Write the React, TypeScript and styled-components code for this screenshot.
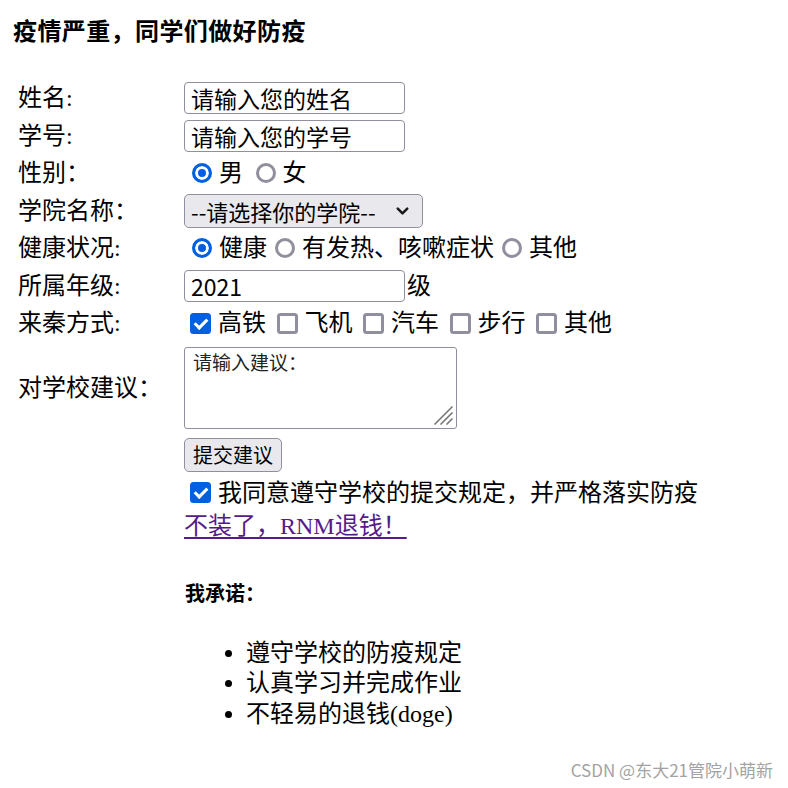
import React from "react";
import styled, { createGlobalStyle } from "styled-components";
import { ChevronDown } from "lucide-react";

const GlobalStyle = createGlobalStyle`
  body {
    margin: 0;
    background: #fff;
    color: #000;
    font-family: "Liberation Serif", "Noto Sans CJK SC", serif;
  }
`;

const Page = styled.div`
  position: relative;
  width: 788px;
  height: 788px;
  box-sizing: border-box;
  padding: 17px 0 0 13px;
  overflow: hidden;
`;

const Title = styled.h4`
  margin: 0;
  font-size: 24px;
  line-height: 30px;
  font-weight: 700;
  letter-spacing: 0.4px;
`;

const Form = styled.form`
  margin-top: 34px;
  display: flex;
  flex-direction: column;
  gap: 3px;
`;

const Row = styled.div<{ $h?: number; $pad?: number }>`
  display: grid;
  grid-template-columns: 171px auto;
  align-items: center;
  min-height: ${(p) => p.$h ?? 34.5}px;
  padding: ${(p) => p.$pad ?? 0}px 0;
  box-sizing: border-box;
`;

const Label = styled.div`
  padding-left: 5px;
  font-size: 24px;
  line-height: 1;
`;

const Field = styled.div`
  display: flex;
  align-items: center;
  font-size: 24px;
  line-height: 1;
`;

const TextInput = styled.input`
  width: 221px;
  height: 32px;
  box-sizing: border-box;
  border: 1.5px solid #8f8f9d;
  border-radius: 4px;
  padding: 0 6px;
  font-family: "Noto Sans CJK SC", sans-serif;
  font-size: 23px;
  color: #000;
  background: #fff;
  outline: none;
`;

const Radio = styled.input.attrs({ type: "radio" })`
  appearance: none;
  width: 20px;
  height: 20px;
  min-width: 20px;
  box-sizing: border-box;
  margin: 0 7px 0 8px;
  border-radius: 50%;
  border: 3px solid #8f8f9d;
  background: #fff;
  flex: none;
  &:checked {
    border: 3px solid #0060df;
    background: #0060df;
    box-shadow: inset 0 0 0 3px #fff;
  }
`;

const Check = styled.input.attrs({ type: "checkbox" })`
  appearance: none;
  position: relative;
  width: 21px;
  height: 21px;
  min-width: 21px;
  box-sizing: border-box;
  margin: 0 7px 0 6px;
  border-radius: 3.5px;
  border: 3px solid #8f8f9d;
  background: #fff;
  flex: none;
  &:checked {
    border-color: #0060df;
    background: #0060df;
  }
  &:checked::after {
    content: "";
    position: absolute;
    left: 4px;
    top: 0px;
    width: 5px;
    height: 10px;
    border: solid #fff;
    border-width: 0 3px 3px 0;
    transform: rotate(45deg);
  }
`;

const OptionText = styled.span<{ $spaced?: boolean }>`
  margin-right: ${(p) => (p.$spaced ? 4.5 : 0)}px;
  white-space: nowrap;
`;

const SelectWrap = styled.div`
  position: relative;
  display: inline-flex;
`;

const Select = styled.select`
  appearance: none;
  width: 239px;
  height: 34px;
  box-sizing: border-box;
  border: 1.5px solid #8f8f9d;
  border-radius: 5px;
  background: #e9e9ed;
  padding: 0 6px;
  font-family: "Noto Sans CJK SC", sans-serif;
  font-size: 22px;
  color: #000;
  outline: none;
`;

const Chevron = styled(ChevronDown)`
  position: absolute;
  right: 11px;
  top: 50%;
  transform: translateY(-50%);
  pointer-events: none;
`;

const Suffix = styled.span`
  margin-left: 2px;
`;

const AreaWrap = styled.div`
  position: relative;
  display: inline-flex;
`;

const TextArea = styled.textarea`
  width: 273px;
  height: 82px;
  box-sizing: border-box;
  border: 1.5px solid #8f8f9d;
  border-radius: 3px;
  padding: 4px 8px;
  resize: none;
  font-family: "Liberation Serif", "Noto Sans CJK SC", serif;
  font-size: 19px;
  line-height: 24px;
  color: #222;
  outline: none;
`;

const Grip = styled.svg`
  position: absolute;
  right: 4px;
  bottom: 4px;
  pointer-events: none;
`;

const Button = styled.button`
  width: 98px;
  height: 34px;
  box-sizing: border-box;
  border: 1.5px solid #8f8f9d;
  border-radius: 5px;
  background: #e9e9ed;
  padding: 0;
  font-family: "Noto Sans CJK SC", sans-serif;
  font-size: 20px;
  color: #000;
`;

const Link = styled.a`
  color: #551a8b;
  font-size: 24px;
  line-height: 30px;
  text-decoration: underline;
  text-underline-offset: 3px;
  white-space: pre;
`;

const Promise = styled.section`
  margin: 41px 0 0 172px;
`;

const PromiseTitle = styled.h5`
  margin: 0;
  font-size: 20px;
  line-height: 24px;
  font-weight: 700;
`;

const List = styled.ul`
  margin: 32px 0 0;
  padding-left: 61px;
  li {
    font-size: 24px;
    line-height: 30.5px;
  }
`;

const Watermark = styled.div`
  position: absolute;
  right: 15px;
  top: 758px;
  font-family: "Noto Sans CJK SC", sans-serif;
  font-size: 17px;
  line-height: 24px;
  color: #a3a3a3;
  white-space: nowrap;
`;

const vehicles = ["高铁", "飞机", "汽车", "步行", "其他"];
const health = ["健康", "有发热、咳嗽症状", "其他"];
const promises = ["遵守学校的防疫规定", "认真学习并完成作业", "不轻易的退钱(doge)"];

export default function App() {
  return (
    <Page>
      <GlobalStyle />
      <Title>疫情严重，同学们做好防疫</Title>
      <Form onSubmit={(e) => e.preventDefault()}>
        <Row>
          <Label>姓名:</Label>
          <Field>
            <TextInput defaultValue="请输入您的姓名" />
          </Field>
        </Row>
        <Row>
          <Label>学号:</Label>
          <Field>
            <TextInput defaultValue="请输入您的学号" />
          </Field>
        </Row>
        <Row>
          <Label>性别：</Label>
          <Field>
            <Radio name="sex" defaultChecked />
            <OptionText $spaced>男</OptionText>
            <Radio name="sex" />
            <OptionText>女</OptionText>
          </Field>
        </Row>
        <Row>
          <Label>学院名称：</Label>
          <Field>
            <SelectWrap>
              <Select defaultValue="">
                <option value="">--请选择你的学院--</option>
              </Select>
              <Chevron size={19} strokeWidth={3.2} color="#1a1a1a" />
            </SelectWrap>
          </Field>
        </Row>
        <Row>
          <Label>健康状况:</Label>
          <Field>
            {health.map((h, i) => (
              <React.Fragment key={h}>
                <Radio name="health" defaultChecked={i === 0} />
                <OptionText>{h}</OptionText>
              </React.Fragment>
            ))}
          </Field>
        </Row>
        <Row>
          <Label>所属年级:</Label>
          <Field>
            <TextInput defaultValue="2021" />
            <Suffix>级</Suffix>
          </Field>
        </Row>
        <Row>
          <Label>来秦方式:</Label>
          <Field>
            {vehicles.map((v, i) => (
              <React.Fragment key={v}>
                <Check defaultChecked={i === 0} />
                <OptionText $spaced>{v}</OptionText>
              </React.Fragment>
            ))}
          </Field>
        </Row>
        <Row $h={88} $pad={3}>
          <Label>对学校建议：</Label>
          <Field>
            <AreaWrap>
              <TextArea defaultValue="请输入建议：" />
              <Grip width="20" height="20" viewBox="0 0 20 20">
                <g stroke="#7a7a7a" strokeWidth="1.7" strokeLinecap="round">
                  <line x1="19" y1="2" x2="2" y2="19" />
                  <line x1="19" y1="8" x2="8" y2="19" />
                  <line x1="19" y1="14" x2="14" y2="19" />
                </g>
              </Grip>
            </AreaWrap>
          </Field>
        </Row>
        <Row $h={40} $pad={3}>
          <span />
          <Field>
            <Button type="submit">提交建议</Button>
          </Field>
        </Row>
        <Row $h={30}>
          <span />
          <Field>
            <Check defaultChecked />
            <OptionText>我同意遵守学校的提交规定，并严格落实防疫</OptionText>
          </Field>
        </Row>
        <Row $h={30}>
          <span />
          <Field>
            <Link href="#">不装了，RNM退钱！</Link>
          </Field>
        </Row>
      </Form>
      <Promise>
        <PromiseTitle>我承诺：</PromiseTitle>
        <List>
          {promises.map((p) => (
            <li key={p}>{p}</li>
          ))}
        </List>
      </Promise>
      <Watermark>CSDN @东大21管院小萌新</Watermark>
    </Page>
  );
}
